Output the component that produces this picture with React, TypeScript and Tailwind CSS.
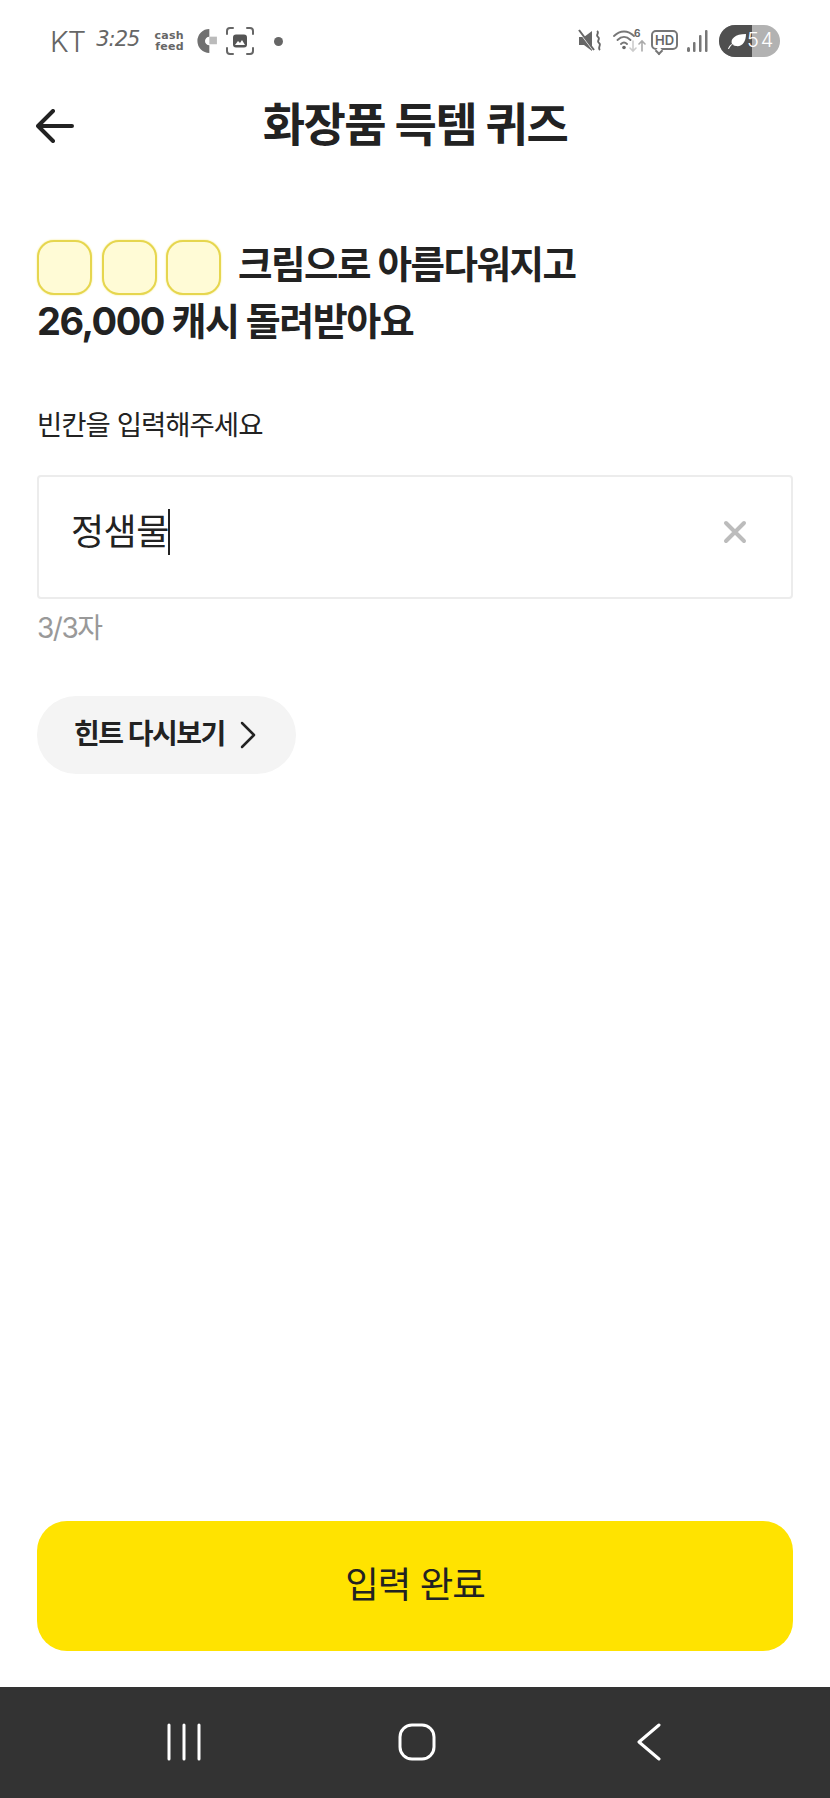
import React from "react";

const font = { fontFamily: '"Inter", "Noto Sans CJK KR", sans-serif' };

function StatusBar() {
  return (
    <div className="h-[82px] flex items-center justify-between pl-[50px] pr-[50px] text-[#666]">
      <div className="flex items-center">
        <span className="text-[29px] leading-none font-light tracking-[-1px] font-['Inter'] text-[#666]">KT</span>
        <span className="ml-[11px] text-[21px] leading-none font-medium italic font-['DejaVu_Sans'] tracking-[-1px] -mt-[3px] text-[#666]">3:25</span>
        <div className="ml-[15px] flex flex-col items-end font-['DejaVu_Sans'] text-[11px] leading-[11px] tracking-[0.300px] font-bold text-[#666]">
          <span>cash</span>
          <span>feed</span>
        </div>
        <svg className="ml-[8px]" width="26" height="26" viewBox="0 0 24 24">
          <path d="M16 1a11 11 0 1 0 0 22v-7a4 4 0 1 1 0-8z" fill="#707070" />
          <rect x="16" y="8" width="7" height="7" fill="#bbb" />
        </svg>
        <svg className="ml-[8px]" width="28" height="28" viewBox="0 0 28 28" fill="none" stroke="#666" strokeWidth="2" strokeLinecap="round">
          <path d="M1 7V4a3 3 0 0 1 3-3h3M21 1h3a3 3 0 0 1 3 3v3M27 21v3a3 3 0 0 1-3 3h-3M7 27H4a3 3 0 0 1-3-3v-3" />
          <rect x="7" y="7.500" width="14" height="13" rx="3" fill="#555" stroke="none" />
          <path d="M9 18l3-4 2 2 2-3 3 5z" fill="#fff" stroke="none" />
        </svg>
        <span className="ml-[20px] w-[9px] h-[9px] rounded-full bg-[#666]" />
      </div>
      <div className="flex items-center">
        <svg width="24" height="24" viewBox="0 0 24 24" fill="none">
          <path d="M1 8h5l8-6v20l-8-6H1z" fill="#666" />
          <path d="M1 2l15 20" stroke="#fff" strokeWidth="2" />
          <path d="M1 1l15 20" stroke="#666" strokeWidth="2" />
          <path d="M19 2c3 2-2 4 1 6s-2 4 1 6-2 4 1 7" stroke="#666" strokeWidth="1.800" />
        </svg>
        <svg className="ml-[11px]" width="33" height="26" viewBox="0 0 33 26" fill="none" strokeLinecap="round">
          <path d="M1 8c6-6 14-6 20 0M4.500 12c4-4 9-4 13 0M8 16c2-2 4-2 6 0" stroke="#777" strokeWidth="1.800" />
          <circle cx="11" cy="19.500" r="1.800" fill="#666" />
          <text x="21" y="9" fontSize="10" fontWeight="700" fontFamily="Inter" fill="#666">6</text>
          <path d="M20 13v10m-3-3l3 3 3-3" stroke="#ccc" strokeWidth="1.600" />
          <path d="M29 23V13m-3 3l3-3 3 3" stroke="#aaa" strokeWidth="1.600" />
        </svg>
        <div className="ml-[5px] relative w-[27px] h-[20px] rounded-[5px] border-2 border-[#777] flex items-center justify-center -mt-[2px]">
          <span className="font-['Inter'] text-[13px] leading-none font-semibold text-[#666]">HD</span>
          <span className="absolute left-[3px] -bottom-[6px] w-[6px] h-[6px] bg-white border-l-2 border-b-2 border-[#777] -rotate-45" />
        </div>
        <svg className="ml-[8px]" width="22" height="24" viewBox="0 0 22 24" fill="#777">
          <rect x="1" y="18" width="3" height="5" rx="1.500" />
          <rect x="7" y="13" width="2.500" height="10" rx="1" />
          <rect x="13" y="6" width="2.500" height="17" rx="1" />
          <rect x="19" y="1" width="2.500" height="22" rx="1" />
        </svg>
        <div className="ml-[11px] w-[61px] h-[32px] rounded-full bg-[#b2b2b2] overflow-hidden flex relative">
          <div className="w-[33px] h-full bg-[#4f4f4f] flex items-center justify-center pl-[3px]">
            <svg width="20" height="18" viewBox="0 0 20 18" fill="#fff">
              <path d="M1 17c1-3 2-4 4-5C3 7 8 2 19 2c0 8-4 13-10 12-2 0-3-1-3-2-2 1-3 3-4 5z" />
            </svg>
          </div>
          <span className="absolute left-[28px] top-[5px] text-[20px] leading-none font-['Inter'] font-light tracking-[2px] text-white">54</span>
        </div>
      </div>
    </div>
  );
}

function Header() {
  return (
    <div className="relative h-[82px] flex items-center justify-center">
      <svg className="absolute left-[36px] top-[27px]" width="38" height="34" viewBox="0 0 38 34" fill="none" stroke="#222" strokeWidth="4" strokeLinecap="round" strokeLinejoin="round">
        <path d="M36 17H2M17 2 2 17l15 15" />
      </svg>
      <h1 className="text-[46px] leading-none font-bold text-[#222] tracking-[-1.500px] mt-[2px]">화장품 득템 퀴즈</h1>
    </div>
  );
}

function Blank() {
  return <span className="w-[55px] h-[55px] rounded-[17px] bg-[#fffbd6] border-2 border-[#e6d64f] shadow-[0_0_2px_#f5e97a]" />;
}

export default function App() {
  return (
    <div className="w-[830px] h-[1798px] bg-white flex flex-col overflow-hidden" style={font}>
      <StatusBar />
      <Header />
      <main className="flex-1 flex flex-col items-start px-[37px] pt-[76px] pb-[36px]">
        <div className="flex items-center h-[55px]">
          <div className="flex gap-[9.500px]">
            <Blank />
            <Blank />
            <Blank />
          </div>
          <span className="ml-[17px] -mt-[5px] text-[37.500px] leading-none font-bold text-[#222] tracking-[-1.500px]">크림으로 아름다워지고</span>
        </div>
        <p className="mt-[4px] text-[38px] leading-[44px] font-bold text-[#222] tracking-[-1.500px]">26,000 캐시 돌려받아요</p>
        <p className="mt-[64px] text-[27.500px] leading-[36px] text-[#222] tracking-[-1px]">빈칸을 입력해주세요</p>
        <div className="mt-[32px] w-full h-[124px] rounded-[4px] border-2 border-[#ececec] flex items-center justify-between pl-[32px] pr-[44px] pb-[10px]">
          <div className="flex items-center">
            <span className="text-[36px] leading-none text-[#222] tracking-[-0.500px]">정샘물</span>
            <span className="w-[2px] h-[46px] bg-[#222] -ml-[1px]" />
          </div>
          <svg width="24" height="24" viewBox="0 0 24 24" fill="none" stroke="#bcbcbc" strokeWidth="4" strokeLinecap="round">
            <path d="M3 3l18 18M21 3 3 21" />
          </svg>
        </div>
        <p className="mt-[11px] text-[28px] leading-[36px] text-[#999] tracking-[-1.500px]">3/3자</p>
        <button className="mt-[50px] w-[259px] h-[78px] rounded-full bg-[#f4f4f4] flex items-center pl-[37px]">
          <span className="text-[28px] leading-none font-bold text-[#222] tracking-[-1.500px] -mt-[2px]">힌트 다시보기</span>
          <svg className="ml-[15px]" width="16" height="28" viewBox="0 0 16 28" fill="none" stroke="#222" strokeWidth="2.500" strokeLinecap="round" strokeLinejoin="round">
            <path d="M2 2l12 12L2 26" />
          </svg>
        </button>
        <button className="mt-auto w-full h-[130px] rounded-[30px] bg-[#ffe300] flex items-center justify-center">
          <span className="text-[36.500px] leading-none text-[#222] tracking-[-1px] -mt-[2px]">입력 완료</span>
        </button>
      </main>
      <nav className="h-[111px] bg-[#333] flex items-start pt-[36px]">
        <svg className="ml-[167px]" width="34" height="38" viewBox="0 0 34 38" fill="none" stroke="#fff" strokeWidth="3" strokeLinecap="round">
          <path d="M2 2v34M17 2v34M32 2v34" />
        </svg>
        <svg className="ml-[197px]" width="38" height="38" viewBox="0 0 38 38" fill="none" stroke="#fff" strokeWidth="3">
          <rect x="2" y="2" width="34" height="34" rx="12" />
        </svg>
        <svg className="ml-[200px]" width="26" height="38" viewBox="0 0 26 38" fill="none" stroke="#fff" strokeWidth="3" strokeLinecap="round" strokeLinejoin="round">
          <path d="M23 2 3 19l20 17" />
        </svg>
      </nav>
    </div>
  );
}
